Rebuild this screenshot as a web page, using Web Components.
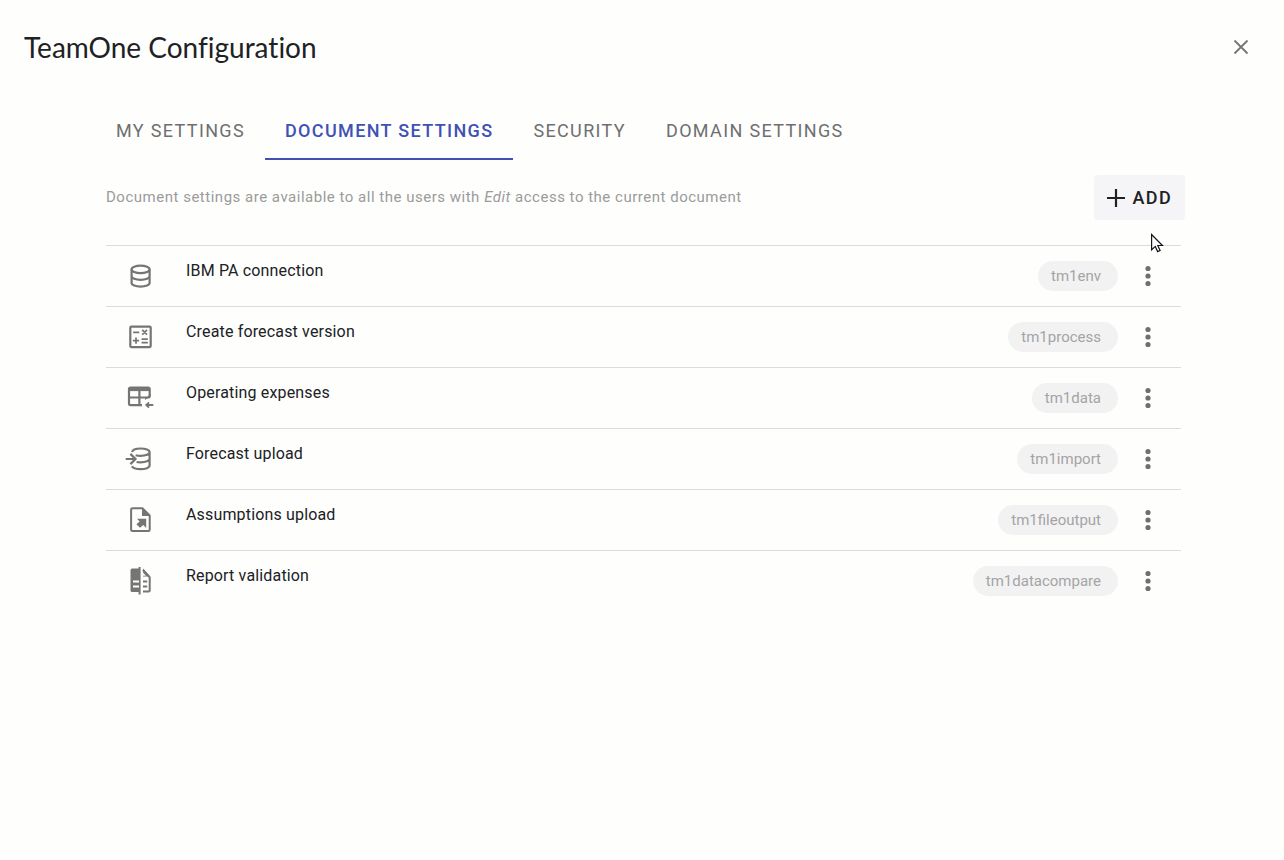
<!DOCTYPE html>
<html lang="en">
<head>
<meta charset="utf-8">
<meta name="viewport" content="width=device-width, initial-scale=1">
<title>TeamOne Configuration</title>
<style>
  body { margin: 0; background: #fefefd; font-family: Roboto, "Liberation Sans", sans-serif; color: #202124; }
</style>
</head>
<body>
<config-dialog heading="TeamOne Configuration">
  <tab-bar slot="tabs">
    <tab-item>MY SETTINGS</tab-item>
    <tab-item active>DOCUMENT SETTINGS</tab-item>
    <tab-item>SECURITY</tab-item>
    <tab-item>DOMAIN SETTINGS</tab-item>
  </tab-bar>
  <settings-toolbar>
    Document settings are available to all the users with <em>Edit</em> access to the current document
    <add-button slot="action">ADD</add-button>
  </settings-toolbar>
  <settings-list>
    <setting-row icon="database" kind="tm1env">IBM PA connection</setting-row>
    <setting-row icon="process" kind="tm1process">Create forecast version</setting-row>
    <setting-row icon="table" kind="tm1data">Operating expenses</setting-row>
    <setting-row icon="import" kind="tm1import">Forecast upload</setting-row>
    <setting-row icon="file" kind="tm1fileoutput">Assumptions upload</setting-row>
    <setting-row icon="compare" kind="tm1datacompare">Report validation</setting-row>
  </settings-list>
</config-dialog>

<script>
const define = (name, html, setup) => {
  const template = document.createElement('template');
  template.innerHTML = html;
  customElements.define(name, class extends HTMLElement {
    constructor() {
      super();
      this.attachShadow({ mode: 'open' }).append(template.content.cloneNode(true));
    }
    connectedCallback() { if (setup) setup(this, this.shadowRoot); }
  });
};

define('config-dialog', `
  <style>
    :host { display: block; }
    header { display: flex; align-items: center; justify-content: space-between; padding: 27px 29px 0 24px; }
    h1 { margin: 0; font: 400 28px/40px Lato, "Open Sans", sans-serif; font-variant-ligatures: none; }
    button { display: grid; place-items: center; width: 28px; height: 28px; padding: 0; border: 0; background: none; color: #757575; }
    nav { padding: 33px 96px 0; }
    main { padding: 15px 100px 0 106px; }
  </style>
  <header>
    <h1></h1>
    <button aria-label="Close"><svg width="16" height="16" viewBox="0 0 16 16" fill="none" stroke="currentColor" stroke-width="1.8"><path d="M1.5 1.5l13 13M14.5 1.5l-13 13"/></svg></button>
  </header>
  <nav><slot name="tabs"></slot></nav>
  <main><slot></slot></main>
`, (el, root) => { root.querySelector('h1').textContent = el.getAttribute('heading'); });

define('tab-bar', `
  <style>:host { display: flex; flex-wrap: wrap; }</style>
  <slot></slot>
`);

define('tab-item', `
  <style>
    :host { display: block; }
    button { box-sizing: border-box; height: 60px; padding: 4px 20px 0; border: 0; border-bottom: 2px solid transparent; background: none; font: 400 18px/24px Roboto, sans-serif; letter-spacing: 0.075em; color: #6f6f70; }
    :host([active]) button { color: #3f51b5; border-color: #3f51b5; font-weight: 500; }
  </style>
  <button><slot></slot></button>
`);

define('settings-toolbar', `
  <style>
    :host { display: flex; justify-content: space-between; align-items: flex-start; gap: 24px; margin-right: -1px; }
    p { margin: 12px 0 0; font-size: 15px; line-height: 20px; letter-spacing: 0.034em; color: #9b9b9b; }
  </style>
  <p><slot></slot></p>
  <slot name="action"></slot>
`);

define('add-button', `
  <style>
    :host { display: block; position: relative; }
    button { display: flex; align-items: center; gap: 8px; height: 45px; padding: 0 13px; border: 0; border-radius: 4px; background: #f5f5f8; font: 500 18px/24px Roboto, sans-serif; letter-spacing: 0.075em; color: #202124; }
    .pointer { position: absolute; right: 21px; top: 58px; }
  </style>
  <button><svg width="18" height="18" viewBox="0 0 18 18" stroke="currentColor" stroke-width="2.2"><path d="M9 0v18M0 9h18"/></svg><span><slot></slot></span></button>
  <svg class="pointer" width="14" height="21" viewBox="0 0 14 21" fill="#fff" stroke="#15151f" stroke-width="1.2"><path d="M1.6 1.5v15.3l3.7-3.4 2.3 5.2 2.5-1.1-2.3-5h4.6z"/></svg>
`);

define('settings-list', `
  <style>:host { display: block; margin: 25px 3px 0 0; }</style>
  <slot></slot>
`);

const icons = {
  database: `<g fill="none" stroke="currentColor" stroke-width="2.2"><ellipse cx="15.6" cy="8.4" rx="9" ry="3.7"/><path d="M6.6 8.4V22c0 2 4 3.6 9 3.6s9-1.6 9-3.6V8.4M6.6 15.2c0 2 4 3.6 9 3.6s9-1.6 9-3.6"/></g>`,
  process: `<g fill="none" stroke="currentColor" stroke-width="2.2"><rect x="5.3" y="4.7" width="20.4" height="20.4" rx="1"/><path stroke-width="1.7" d="M8.2 10.3h6M17.2 7.9l4.8 4.8M22 7.9l-4.8 4.8M7.9 18.7h6.2M11 15.6v6.2M16.6 17.2h6.2M16.6 20.6h6.2"/></g>`,
  table: `<g fill="none" stroke="currentColor" stroke-width="2.2"><path d="M17 22.2H5.6A1.6 1.6 0 0 1 4 20.6V6.1a1.6 1.6 0 0 1 1.6-1.6h17.5a1.6 1.6 0 0 1 1.6 1.6v6.8a1.6 1.6 0 0 1-1.6 1.6H4M14.4 5v17"/><path stroke-width="3.6" d="M4 6.3h20.7"/><path stroke-width="1.8" d="M28.3 22h-7M24 19.3L21.2 22l2.8 2.7"/></g><path fill="currentColor" d="M20 15.5V17l5.7-4V11z"/>`,
  import: `<g fill="none" stroke="currentColor" stroke-width="2.2"><path d="M7.1 8c.4-2 4-3.5 8.5-3.5 5 0 9 1.6 9 3.7s-4 3.7-9 3.7c-2 0-3.6-.3-5-.7M24.6 8.2v13.4c0 2-4 3.6-9 3.6-4.3 0-7.8-1.2-8.7-2.9M24.6 14.8c0 2-4 3.6-9 3.6-1.5 0-2.8-.1-4-.4"/><path d="M.7 15h9.2M5.4 9.9l5.1 5.1-5.1 5.1"/></g>`,
  file: `<path fill="none" stroke="currentColor" stroke-width="2" stroke-linejoin="round" d="M7.6 3.2h9.8l7.3 7.3v14a1.5 1.5 0 0 1-1.5 1.5H7.6a1.5 1.5 0 0 1-1.5-1.5V4.7a1.5 1.5 0 0 1 1.5-1.5z"/><path fill="currentColor" d="M17 3v8h8zM12 13.8h9.2V23l-3-3-3.2 2.8-3.6-3.6 3.2-2.8z"/>`,
  compare: `<path fill="currentColor" fill-rule="evenodd" d="M13.6 1h2v27.5h-2v-2.4H7.2a1.7 1.7 0 0 1-1.7-1.7V4.2a1.7 1.7 0 0 1 1.7-1.7h6.4zM8 14.6v2h6v-2zM8 19.6v2h6v-2z"/><path fill="none" stroke="currentColor" stroke-width="2" d="M18 3.8l6.7 7.5v13.1a1 1 0 0 1-1 1H18"/><path fill="currentColor" d="M18 2.5v8h7.3zM18 14.6h4.2v2H18zM18 19.6h4.2v2H18z"/><path fill="#fefefd" d="M18 6.5v3.2h3z"/>`
};

define('setting-row', `
  <style>
    :host { display: grid; grid-template-columns: 30px 1fr auto 28px; align-items: center; height: 60px; padding: 0 19px; border-top: 1px solid #dcdcdc; }
    .icon { width: 30px; height: 30px; color: #757575; }
    .name { align-self: start; margin: 15px 0 0 31px; font-size: 16px; line-height: 20px; letter-spacing: 0.01em; color: #202124; }
    .chip { height: 30px; padding: 0 17px 0 13px; border-radius: 15px; margin-right: 16px; background: #f2f2f3; color: #a4a4a4; font-size: 15px; line-height: 30px; }
    button { display: grid; place-items: center; height: 30px; padding: 0; border: 0; background: none; color: #6f6f70; }
  </style>
  <svg class="icon" viewBox="0 0 30 30" aria-hidden="true"></svg>
  <span class="name"><slot></slot></span>
  <span class="chip"></span>
  <button aria-label="More options"><svg width="6" height="22" viewBox="0 0 6 22" fill="currentColor"><circle cx="3" cy="3.5" r="2.6"/><circle cx="3" cy="11" r="2.6"/><circle cx="3" cy="18.5" r="2.6"/></svg></button>
`, (el, root) => {
  root.querySelector('.icon').innerHTML = icons[el.getAttribute('icon')];
  root.querySelector('.chip').textContent = el.getAttribute('kind');
});
</script>
</body>
</html>
